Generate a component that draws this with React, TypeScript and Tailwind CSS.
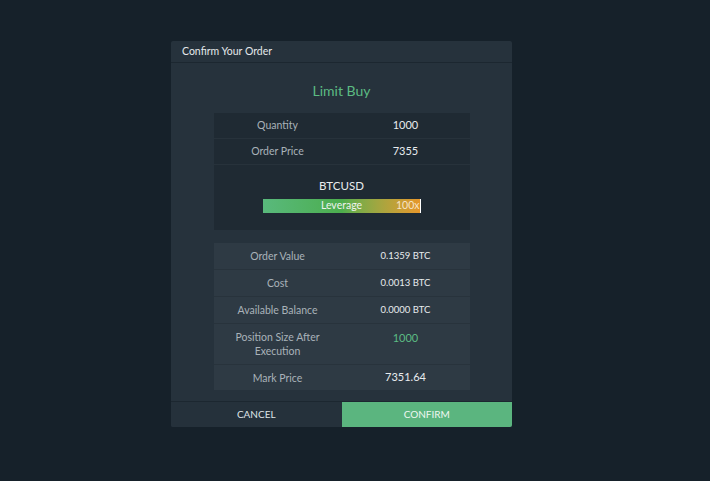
type Row = { label: string; value: string; tone?: 'green'; small?: boolean; h: string };

const summary: Row[] = [
  { label: 'Order Value', value: '0.1359 BTC', small: true, h: 'h-[27px]' },
  { label: 'Cost', value: '0.0013 BTC', small: true, h: 'h-[27px]' },
  { label: 'Available Balance', value: '0.0000 BTC', small: true, h: 'h-[27px]' },
  { label: 'Position Size After Execution', value: '1000', tone: 'green', h: 'h-[41px]' },
  { label: 'Mark Price', value: '7351.64', h: 'h-[25px]' },
];

export default function App() {
  return (
    <div
      className="flex h-[481px] w-[710px] items-start bg-[#16212a] pl-[171px] pt-[41px]"
      style={{ fontFamily: 'Lato, "Helvetica Neue", Arial, sans-serif' }}
    >
      <div className="flex w-[341px] flex-col overflow-hidden rounded-[2px] bg-[#26323c]">
        {/* Header */}
        <div className="flex h-[22px] items-center border-b border-[#1c2730] px-[11px] text-[10.5px] text-[#e4e8eb]">
          Confirm Your Order
        </div>

        <div className="flex flex-col items-center pb-[11px]">
          <div className="pt-[18px] text-[14px] leading-[20px] text-[#5cbc83]">Limit Buy</div>

          {/* Quantity / price / leverage */}
          <div className="mt-[12px] flex w-[256px] flex-col bg-[#1f2a33]">
            <div className="grid h-[26px] grid-cols-2 items-center border-b border-[#27323b] text-[10.5px]">
              <span className="text-center text-[#a9b2b9]">Quantity</span>
              <span className="text-center text-[11px] text-[#e8ecee]">1000</span>
            </div>
            <div className="grid h-[26px] grid-cols-2 items-center border-b border-[#27323b] text-[10.5px]">
              <span className="text-center text-[#a9b2b9]">Order Price</span>
              <span className="text-center text-[11px] text-[#e8ecee]">7355</span>
            </div>
            <div className="flex flex-col items-center pb-[17px] pt-[13px]">
              <div className="text-[11.5px] leading-[16px] text-[#e8ecee]">BTCUSD</div>
              <div className="relative mt-[5px] h-[14px] w-[158px] bg-gradient-to-r from-[#59b97c] via-[#4cae4d] to-[#e8962a] text-[10.5px] text-[#eef2ee]">
                <span className="absolute inset-0 flex items-center justify-center">Leverage</span>
                <span className="absolute inset-y-0 right-0 flex items-center pr-[1px] text-[#f6e4c8]">100x</span>
                <span className="absolute right-0 top-0 h-full w-[1px] bg-white" />
              </div>
            </div>
          </div>

          {/* Order summary */}
          <div className="mt-[13px] flex w-[256px] flex-col bg-[#2e3a44]">
            {summary.map((row, i) => (
              <div
                key={row.label}
                className={`grid grid-cols-2 items-center text-[10.5px] ${row.h} ${i < summary.length - 1 ? 'border-b border-[#28333c]' : ''}`}
              >
                <span className="px-3 text-center leading-[14px] text-[#a9b2b9]">{row.label}</span>
                <span
                  className={`text-center ${row.tone === 'green' ? 'self-start pt-[6px] text-[#5cbc83]' : 'text-[#e8ecee]'} ${row.small ? 'text-[9.5px]' : 'text-[11px]'}`}
                >
                  {row.value}
                </span>
              </div>
            ))}
          </div>
        </div>

        {/* Actions */}
        <div className="grid h-[26px] grid-cols-2 border-t border-[#1c2730] text-[10px]">
          <button className="bg-[#25313b] text-[#dfe4e7]">CANCEL</button>
          <button className="bg-[#5bb57f] text-[#eef7f1]">CONFIRM</button>
        </div>
      </div>
    </div>
  );
}
